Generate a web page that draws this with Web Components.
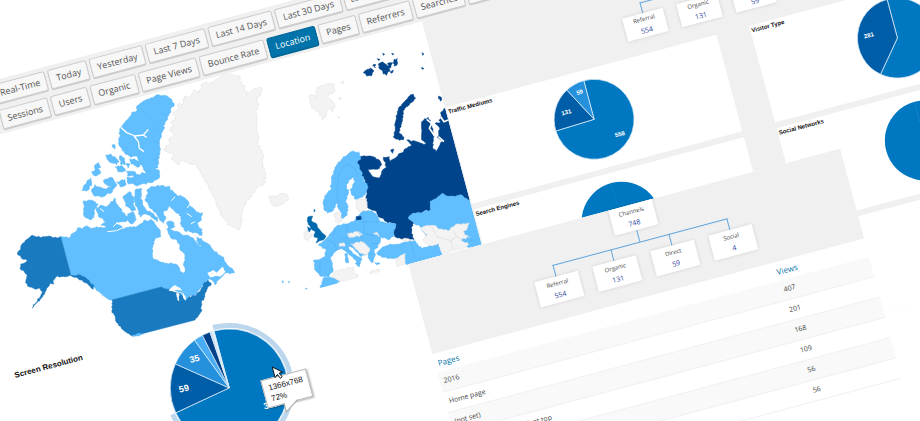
<!DOCTYPE html>
<html lang="en">
<head>
<meta charset="utf-8">
<title>Analytics overview</title>
<style>
  html, body { margin: 0; height: 100%; overflow: hidden; background: #fff; }
  body { font-family: "Open Sans", "Noto Sans", sans-serif; color: #444; }
</style>
</head>
<body>
<analytics-collage>
  <report-window slot="dashboard" style="--x:402px;--y:130px;--w:598px;--bg:#f0f0f0">
    <org-chart root="Channels:748" nodes="Referral:554,Organic:131,Direct:59,Social:4" style="--nw:42px;--nh:24px;--gap:14px;--drop:11px;padding:3px 0 16px"></org-chart>
    <card-grid>
      <stat-card heading="Traffic Mediums"><pie-chart radius="40" size="100" font="6"
        slices="0:268:#0078c1,268:332:#005da8,332:360:#2590dc" labels="558:21:21,131:-25:-14,59:-7:-30"></pie-chart></stat-card>
      <stat-card heading="Visitor Type"><pie-chart radius="40" size="100" font="6"
        slices="0:220:#0078c1,220:360:#005da8" labels="281:-27:-10"></pie-chart></stat-card>
      <stat-card heading="Search Engines"><pie-chart radius="40" size="100" font="6" slices="0:359.9:#0078c1"></pie-chart></stat-card>
      <stat-card heading="Social Networks"><pie-chart radius="40" size="100" font="6" slices="0:359.9:#0078c1"></pie-chart></stat-card>
      <stat-card></stat-card>
      <stat-card></stat-card>
    </card-grid>
  </report-window>
  <report-window slot="main" style="--x:-120px;--y:76px;--w:1120px">
    <tool-bar></tool-bar>
    <geo-map></geo-map>
    <resolution-panel></resolution-panel>
  </report-window>
  <report-window slot="channels" style="--x:326px;--y:361px;--w:447px;--bg:#fff">
    <org-chart root="Channels:748" nodes="Referral:554,Organic:131,Direct:59,Social:4" style="--nw:45px;--nh:26px;--gap:15px;--drop:12px;padding:0 0 17px 11px;background:#f0f0f0"></org-chart>
    <page-table></page-table>
  </report-window>
</analytics-collage>

<script>
const define = (name, markup) => {
  const tpl = document.createElement('template');
  customElements.define(name, class extends HTMLElement {
    connectedCallback() {
      if (this.shadowRoot) return;
      const root = this.attachShadow({ mode: 'open' });
      tpl.innerHTML = typeof markup === 'function' ? markup(this) : markup;
      root.append(tpl.content.cloneNode(true));
    }
  });
};

/* Tilted canvas that carries three overlapping report windows */
define('analytics-collage', `
<style>
  :host { display: block; position: relative; width: 100%; height: 100vh; overflow: hidden; background: #fff; }
  .plane { position: absolute; left: 0; top: 0; width: 1000px; height: 660px; transform: rotate(-15deg); transform-origin: 0 0; }
</style>
<main class="plane"><slot name="main"></slot><slot name="dashboard"></slot><slot name="channels"></slot></main>`);

define('report-window', `
<style>
  :host { display: block; position: absolute; left: var(--x); top: var(--y); width: var(--w); background: var(--bg, transparent); }
  :host([slot="channels"]) { z-index: 3; min-height: 320px; }
  :host([slot="dashboard"]) { z-index: 1; }
</style><slot></slot>`);

define('tool-bar', () => {
  const btn = (t, on) => `<button type="button"${on ? ' class="on" aria-pressed="true"' : ''}>${t}</button>`;
  const rows = [
    ['Real-Time', 'Today', 'Yesterday', 'Last 7 Days', 'Last 14 Days', 'Last 30 Days', 'Last 60 Days'],
    ['Sessions', 'Users', 'Organic', 'Page Views', 'Bounce Rate', 'Location', 'Pages', 'Referrers', 'Searches', 'Keywords']
  ];
  return `<style>
  :host { display: grid; gap: 6px; padding: 4px 0 4px 89px; background: #f0f0f0; }
  nav { display: flex; gap: 3px; }
  nav + nav { padding-left: 1px; }
  button { font: 9px/18px "Open Sans", "Noto Sans", sans-serif; height: 20px; box-sizing: border-box; padding: 0 6px;
    color: #555; background: #f7f7f7; border: 1px solid #ccc; border-radius: 2px; box-shadow: 0 1px 0 #ccc; white-space: nowrap; }
  .on { background: #0073aa; border-color: #006799; color: #fff; box-shadow: 0 1px 0 #006799; }
  </style>` + rows.map(r => `<nav>${r.map(t => btn(t, t === 'Location')).join('')}</nav>`).join('');
});

define('card-grid', `
<style>:host { display: grid; grid-template-columns: 280px 280px; gap: 6px 34px; padding-left: 1px; }</style><slot></slot>`);

define('stat-card', el => `
<style>
  :host { display: grid; grid-template-columns: 1fr; height: 100px; background: #fff; font-family: "Liberation Sans", Arial, sans-serif; color: #111; }
  h2 { grid-area: 1/1; margin: 1px 1px; font-size: 6px; line-height: 8px; font-weight: 700; }
  ::slotted(*) { grid-area: 1/1; justify-self: center; }
</style>${el.getAttribute('heading') ? `<h2>${el.getAttribute('heading')}</h2>` : ''}<slot></slot>`);

const polar = (r, deg) => {
  const a = deg * Math.PI / 180;
  return [(r * Math.sin(a)).toFixed(2), (-r * Math.cos(a)).toFixed(2)];
};
const wedge = (r, a, b) => `M0 0L${polar(r, a)}A${r} ${r} 0 ${b - a > 180 ? 1 : 0} 1 ${polar(r, b)}Z`;

define('pie-chart', el => {
  const r = +el.getAttribute('radius'), size = +el.getAttribute('size'), h = size / 2;
  const slices = el.getAttribute('slices').split(',').map(s => s.split(':'));
  const labels = (el.getAttribute('labels') || '').split(',').filter(Boolean).map(s => s.split(':'));
  const edge = slices.length > 1 ? ' stroke="#dcebf7" stroke-width=".7"' : '';
  const halo = el.getAttribute('halo');
  return `<style>
    :host { display: block; position: relative; }
    svg { display: block; }
    text { fill: #fff; font-family: "Liberation Sans", Arial, sans-serif; font-weight: 700; text-anchor: middle; dominant-baseline: central; }
  </style>
  <svg width="${size}" height="${size}" viewBox="${-h} ${-h} ${size} ${size}" role="img" aria-label="Pie chart">
    ${halo ? `<path d="${wedge(r + 6, 0, +halo)}" fill="#bcd6ee"/><path d="${wedge(r + 1, 0, +halo)}" fill="#fff"/>` : ''}
    ${slices.map(([a, b, c]) => `<path d="${wedge(r, +a, +b)}" fill="${c}"${edge}/>`).join('')}
    ${labels.map(([t, x, y]) => `<text x="${x}" y="${y}" font-size="${el.getAttribute('font')}">${t}</text>`).join('')}
  </svg><slot></slot>`;
});

define('resolution-panel', `
<style>
  :host { display: grid; grid-template-columns: 132px 144px; padding: 1px 0 0 37px; font-family: "Liberation Sans", Arial, sans-serif; }
  h2 { margin: 0; font-size: 8px; line-height: 10px; color: #111; white-space: nowrap; }
  .tip { position: absolute; left: 104px; top: 73px; width: 47px; height: 29px; box-sizing: border-box; padding: 3px 5px;
    background: #fff; border: 1px solid #bbb; box-shadow: 1px 1px 2px #0005; font-size: 8px; line-height: 11px; color: #111; }
  .tail { position: absolute; left: 116px; top: 100px; }
  .cursor { position: absolute; left: 118px; top: 62px; }
</style>
<h2>Screen Resolution</h2>
<pie-chart radius="59" size="144" font="9" halo="260"
  slices="0:260:#0078c1,260:309:#005da8,309:339:#2590dc,339:348:#48adf4,348:356:#00428a,356:358:#c5dcf0,358:360:#e6f1fa"
  labels="59:-44:-11,35:-26:-37,312:36:27">
  <div class="tip">1366x768<br>72%</div>
  <svg class="tail" width="22" height="13" viewBox="0 0 22 13" aria-hidden="true"><path d="M5 0L5 10L19 0" fill="#fff"/><path d="M5 1L5 10L19 1" fill="none" stroke="#aaa"/></svg>
  <svg class="cursor" width="12" height="16" viewBox="0 0 12 16" aria-hidden="true"><path d="M1 1L1 12L4 9.500L6 14L8 13L6 8.700L9.500 8.500Z" fill="#fff" stroke="#111" stroke-width=".9"/></svg>
</pie-chart>`);

define('org-chart', el => {
  const node = s => { const [a, b] = s.split(':'); return `<div class="node"><span>${a}</span><a href="#${a}">${b}</a></div>`; };
  return `<style>
  :host { display: flex; flex-direction: column; align-items: center; }
  .node { position: relative; width: var(--nw); height: var(--nh); display: grid; align-content: center; justify-items: center;
    background: #fff; box-shadow: 0 0 4px #0002; font-size: 6px; line-height: 11px; color: #444; }
  a { font-size: 7px; color: #2a3f9b; text-decoration: none; }
  .stem { width: 1px; height: var(--drop); background: #61a5dc; }
  .bar { width: calc((var(--nw) + var(--gap)) * 3 + 1px); height: 1px; background: #61a5dc; }
  .row { display: flex; gap: var(--gap); padding-top: calc(var(--drop) - 1px); }
  .row .node::before { content: ""; position: absolute; left: 50%; top: calc(var(--drop) * -1); width: 1px; height: var(--drop); background: #61a5dc; }
  </style>${node(el.getAttribute('root'))}<div class="stem"></div><div class="bar"></div>
  <div class="row">${el.getAttribute('nodes').split(',').map(node).join('')}</div>`;
});

define('page-table', () => {
  const rows = [['2016', 407], ['Home page', 201], ['(not set)', 168], ['Dashboard report widget top', 109], ['Contact', 56], ['About', 56]];
  return `<style>
  :host { display: block; background: #fff; }
  table { width: 100%; border-collapse: collapse; table-layout: fixed; font-size: 7px; color: #444; }
  th, td { padding: 0 4px; height: 20px; line-height: 20px; border-bottom: 1px solid #f0f0f0; font-weight: 400; text-align: left; white-space: nowrap; }
  th { height: 19px; line-height: 19px; padding: 0 3px; font-size: 8px; border: 0; }
  th:last-child, td:last-child { width: 38%; box-sizing: border-box; text-align: center; }
  th:last-child { padding-left: 8px; }
  a { color: #0073aa; text-decoration: none; }
  tbody tr:nth-child(odd) { background: #f9f9f9; }
  </style>
  <table><thead><tr><th><a href="#pages">Pages</a></th><th><a href="#views">Views</a></th></tr></thead>
  <tbody>${rows.map(r => `<tr><td>${r[0]}</td><td>${r[1]}</td></tr>`).join('')}</tbody></table>`;
});

/* Coastlines: each short edge is broken up with a repeatable offset; long edges stay straight as land borders */
const hash = n => { const v = Math.sin(n) * 43758.5453; return v - Math.floor(v); };
const coast = (str, amp = 5) => str.split('|').map(part => {
  const n = part.trim().split(/[ ,]+/).map(Number), p = [];
  for (let i = 0; i < n.length; i += 2) p.push([n[i], n[i + 1]]);
  let d = '';
  p.forEach((a, i) => {
    const b = p[(i + 1) % p.length], len = Math.hypot(b[0] - a[0], b[1] - a[1]);
    d += (i ? 'L' : 'M') + a[0] + ' ' + a[1];
    if (len > 100 || !amp) return;
    const k = Math.min(6, Math.floor(len / 5)), flip = a[0] > b[0] || (a[0] === b[0] && a[1] > b[1]);
    for (let j = 1; j < k; j++) {
      const t = j / k, jj = flip ? k - j : j, s = (a[0] + b[0]) * 1.3 + (a[1] + b[1]) * 2.7 + jj * 9.1;
      d += 'L' + (a[0] + (b[0] - a[0]) * t + (hash(s) - .5) * amp).toFixed(1) + ' ' + (a[1] + (b[1] - a[1]) * t + (hash(s + 5) - .5) * amp).toFixed(1);
    }
  });
  return d + 'Z';
}).join('');

define('geo-map', () => {
  const L = '#61bfff', D = '#1a7abf', R = '#00458c', G = '#f3f3f3';
  const land = (pts, fill, amp) => `<path d="${coast(pts, amp)}" fill="${fill}" stroke="${fill === G ? '#dedede' : fill === L ? '#58b5f4' : fill}" stroke-width="${fill === '#fff' ? 0 : 1.5}"/>`;
  const line = (d, c = '#fff', w = 4) => `<path d="${d}" fill="none" stroke="${c}" stroke-width="${w}" stroke-linejoin="round"/>`;
  return `<style>
  :host { display: block; width: 522px; background: #fff; }
  svg { display: block; width: 100%; height: auto; overflow: hidden; }
  </style>
  <svg viewBox="-120 130 522 231" role="img" aria-label="Visitors by country">
  <g transform="rotate(15) translate(0 80) scale(.33333)">
    ${land('493,205 510,192 505,178 522,165 508,152 520,140 512,128 528,115 518,100 535,90 532,75 550,70 552,50 575,52 580,30 600,35 610,10 640,5 660,-8 690,-18 712,-14 724,8 735,22 740,45 750,35 760,28 785,25 782,40 768,55 776,75 765,95 770,120 768,150 778,170 772,190 785,210 788,240 794,265 798,290 790,315 770,325 755,342 740,360 730,385 722,400 724,430 718,450 708,448 695,440 680,425 668,412 660,395 650,370 640,350 635,335 620,312 608,290 600,270 585,255 560,245 548,240 530,252 515,240 520,225 500,215', G, 9)}
    ${land('182,470 210,474 214,462 228,455 232,444 246,447 262,438 275,446 290,440 310,444 325,436 340,444 355,440 372,447 390,440 405,442 420,432 432,420 445,424 452,418 462,426 470,440 482,452 482,470 465,475 458,495 457,520 462,538 480,545 500,550 520,552 533,556 540,572 552,580 556,572 550,555 556,540 552,520 540,510 538,492 528,478 512,474 505,460 500,446 515,450 530,454 548,466 565,466 580,474 590,492 600,500 608,482 625,492 640,510 655,525 672,532 678,548 688,562 700,570 704,578 690,582 678,578 665,590 655,600 645,614 636,600 625,598 615,610 600,625 585,645 568,650 558,660 545,640 525,632 508,628 480,622 336,660 325,658 300,640 282,622 262,600 240,588 213,587', L)}
    ${land('182,470 213,587 185,590 172,588 160,600 162,612 150,610 140,625 128,650 110,668 96,684 108,668 122,648 128,636 120,625 108,628 95,622 82,618 78,600 82,585 72,572 60,565 62,552 75,548 82,542 68,538 52,522 62,508 68,490 85,475 98,466 120,472 150,468 170,474|213,587 240,585 262,598 282,618 280,628 265,614 250,606 235,597', D)}
    ${land('336,660 480,622 508,628 516,634 540,640 545,645 552,650 557,662 568,650 585,648 602,630 612,608 624,600 634,612 622,626 615,640 612,655 604,668 602,684 606,692 600,700 585,720 400,768 385,760 372,752 350,728 340,700 336,690', D)}
    ${land('396,768 410,762 430,762 405,769', L)}
    ${land('506,632 523,616 538,622 547,632 528,630 515,634|528,640 537,640 538,664 532,660|546,636 556,648 557,662 550,655|622,580 640,570 650,578 668,560 676,575 660,590 645,588 630,592', '#fff', 3)}
    ${land('465,48 480,46 500,47 515,58 522,70 512,92 502,112 495,130 490,150 485,168 478,185 480,205 478,225 476,245 474,264 455,268 440,276 430,268 425,255 415,240 410,228 395,232 375,222 365,205 355,190 358,172 360,155 365,140 375,125 390,108 400,96 415,90 410,78 425,68 440,58 452,54', L, 7)}
    <g transform="translate(225 180)">
      ${land('25,140 36,122 47,114 50,130 40,150 22,152|50,150 60,134 78,142 95,146 118,140 112,156 95,162 80,172 56,166|85,122 110,112 118,124 126,135 118,143 95,135|60,75 72,68 78,82 62,90|50,95 72,88 78,98 66,107 54,104|92,45 106,42 120,50 132,65 125,75 108,68 96,56|133,48 148,54 150,75 138,74|120,80 140,76 152,92 130,96|152,72 165,72 160,84|165,56 182,60 200,68 186,82 168,72|111,15 121,18 119,28|154,95 180,95 183,108 158,108|155,112 174,112 185,132 160,132|124,126 150,118 153,135 135,140|175,110 198,100 215,96 235,86 252,90 254,112 228,128 182,137', L, 6)}
      ${land('24,186 45,181 60,185 70,193 60,205 58,232 45,240 28,230|62,206 76,196 95,200 106,190 118,174 128,195 140,208 150,222 160,235 150,246 122,246 145,262 128,274 100,272 104,262 78,256 92,244 72,232|145,168 165,155 178,175 175,195 182,210 170,214 158,200 150,185|180,150 201,146 196,175 205,198 214,210 225,214 248,232 246,246 225,226 206,222 196,232 188,205 180,195|158,222 176,216 184,238 168,252 160,244', L, 6)}
    </g>
    ${land('440,330 462,320 490,316 510,325 525,340 548,350 565,365 575,382 590,396 608,398 605,420 592,430 606,450 606,466 590,458 570,456 552,450 540,432 545,410 530,400 520,388 510,378 500,392 490,396 498,412 492,430 478,418 468,396 450,385 438,365|590,470 605,476 608,496 592,492|500,428 516,424 525,440 510,448', L, 8)}
    ${line('M362 142L380 158L405 168L430 165L445 148M402 168L415 185L418 205L432 215M380 158L372 150M430 165L440 172')}
    ${line('M366 215L385 200M440 100L425 92M470 150L455 140M478 190L460 184M476 230L462 240M500 110L486 98', '#50abeb', 1.2)}
    ${line('M322 455L350 452L372 442M640 588L655 580M290 632L310 648M560 400L575 410M525 350L515 362M585 425L572 432M482 452L492 470M300 385L312 395M340 440L352 428M570 372L562 384', '#fff', 3)}
  </g>
  <g transform="rotate(15) translate(240 40) scale(.33333)">
    ${land('205,170 218,164 228,175 232,140 260,132 285,137 282,158 262,170 275,180 285,200 278,215 264,205 250,240 235,215 215,205|85,472 100,465 106,472 125,460 142,465 144,480 130,492 108,500 92,490|302,128 312,125 308,132|295,175 303,172 300,180|294,230 300,232 295,235', G, 8)}
    ${land('370,98 382,88 392,84 402,92 394,108 380,108|415,72 428,66 440,74 436,90 420,88|442,72 458,68 452,84 444,82|462,58 472,55 472,72 462,78|428,94 446,92 440,106 430,102|428,40 434,43 430,46|455,40 462,42 458,45|448,94 460,90 455,100|546,38 552,42 548,46|545,82 552,86 546,88|596,168 604,172 602,184|412,56 420,58 416,62|398,78 408,74 406,84|434,78 446,80 450,92 438,92', R, 7)}
    ${land('520,163 527,175 510,190 495,205 488,225 485,250 478,280 492,292 490,300 470,298 460,290 466,260 468,230 475,205 490,188 508,168', R)}
    ${land('500,300 530,305 552,314 560,308 545,300 545,245 565,232 575,255 582,290 578,320 588,336 598,318 610,300 592,292 600,268 585,250 602,245 604,215 625,200 760,200 760,490 686,480 665,465 645,470 620,468 608,460 590,475 570,485 572,510 540,518 515,522 505,535 518,545 522,565 515,575 522,600 490,597 465,590 460,575 468,552 440,545 415,530 410,515 385,505 378,480 382,440 370,410 360,390 352,370 355,350 375,348 400,350 418,360 425,375 412,388 386,386 392,402 405,412 420,412 425,395 440,382 430,352 448,350 450,365 465,355 480,340 500,325 515,316', R)}
    ${land('452,330 462,328 458,340|596,240 606,236 602,246', R, 3)}
    ${line('M560 238L575 250L568 265L582 285M602 230L612 245L624 240M595 290L612 305', '#fff', 5)}
    ${land('505,535 515,522 540,518 572,510 570,485 590,475 608,460 620,468 645,470 665,465 686,480 760,490 760,640 680,620 690,600 670,575 600,600 560,590 540,560 518,545', L)}
    ${land('540,562 562,556 580,556 600,568 630,570 650,552 688,550 680,570 668,582 690,590 686,612 670,625 640,632 605,645 595,622 575,620 560,610 548,600 562,585', G)}
    ${land('664,600 680,592 700,600 685,612', L, 14)}
    ${line('M575 560L590 590L632 602L640 628M632 602L650 590L640 572M650 590L672 600', '#ccc', 1.2)}
    ${land('410,638 430,620 450,612 480,612 522,600 545,615 560,622 595,612 605,645 500,675 492,658 470,655 450,655 425,652', L)}
    ${land('468,655 495,640 495,672 470,680', G, 4)}
    ${land('515,562 535,555 542,568 530,580 545,600 564,618 545,624 530,610 525,590', '#fff')}
    ${land('250,485 258,465 272,450 275,420 280,395 290,375 310,350 335,335 355,335 362,350 352,365 360,390 370,410 384,440 375,465 350,478 335,465 330,448 345,425 342,412 326,420 320,440 325,455 318,480 325,500 322,525 308,537 298,510 290,490 275,515 262,520 252,500', L, 7)}
    ${land('272,580 290,558 315,552 340,545 352,530 365,515 395,512 412,528 420,545 468,552 460,590 445,600 425,590 418,610 414,622 402,630 405,648 396,668 385,655 382,640 365,650 355,640 340,625 325,620 340,642 366,658 355,680 350,665 325,640 305,625 290,632 272,650 280,690 265,712 240,708 225,690 222,660 245,655 255,650 258,630 235,615 255,600', L)}
    ${land('321,580 355,575 368,584 340,592 325,590|332,612 362,604 380,615 390,628 380,645 362,640|350,480 380,475 382,508 358,516 348,500|282,522 298,515 306,545 290,547|193,578 208,570 216,590 204,602 194,596|296,612 312,608 316,616 300,620|270,718 285,695 305,688 340,682 342,700 355,706 350,730|400,580 410,576 418,590|392,694 418,688 418,704 392,704|482,598 505,596 522,602 500,606', G)}
    ${land('240,742 252,712 280,715 300,725 270,740', L, 4)}
    ${land('314,642 322,640 326,668 318,668|345,670 362,668 358,680|126,722 132,726 128,728|145,724 150,726 146,728|196,744 202,746 198,748|404,668 420,670 410,674', L, 3)}
    ${land('203,532 218,528 214,542 228,550 238,568 246,578 258,588 250,600 228,608 235,594 222,590 226,575 212,564 204,548|222,508 226,512 222,516|203,560 214,566 208,576', '#0069ae', 4)}
    ${land('348,530 362,528 364,538 350,540', R, 2)}
    ${line('M320 370L298 400L290 450L296 500M318 370L345 385L352 410M262 600L285 610L290 630M320 550L324 590L305 600M370 545L375 580L405 590M355 575L370 600M240 662L240 705M365 515L370 545L415 545M510 600L525 650M285 560L280 590M395 610L420 612', '#51a5e2', 1.2)}
  </g></svg>`;
});
</script>
</body>
</html>
